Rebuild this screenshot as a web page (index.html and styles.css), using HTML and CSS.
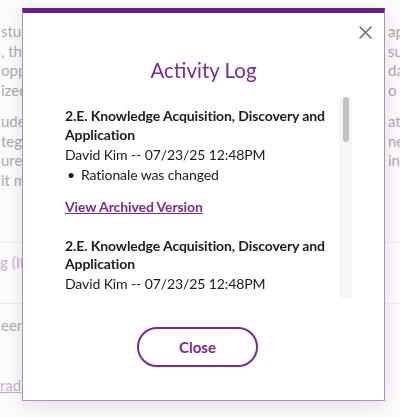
FILE: index.html
```html
<!DOCTYPE html>
<html lang="en">

<head>
    <meta charset="UTF-8">
    <meta name="viewport" content="width=device-width, initial-scale=1.0">
    <title>Activity Log</title>
    <link rel="stylesheet" href="styles.css">
</head>

<body>
    <div class="page">
        <div class="para">
            <div class="line"><span>students will be able to</span><span>apply</span></div>
            <div class="line"><span>, the program will</span><span>sup</span></div>
            <div class="line"><span>opportunities for</span><span>dat</span></div>
            <div class="line"><span>ized assessments</span><span>o ev</span></div>
        </div>
        <div class="para">
            <div class="line"><span>udents in the</span><span>atio</span></div>
            <div class="line"><span>tegrated into</span><span>ne</span></div>
            <div class="line"><span>ure and</span><span>ine</span></div>
            <div class="line"><span>it methods</span><span></span></div>
        </div>
        <div class="section">
            <a class="page-link">g (If applicable)</a>
        </div>
        <div class="section last">
            <div class="line"><span>een completed</span><span></span></div>
            <a class="page-link under">rad (Optional)</a>
        </div>
    </div>

    <div class="backdrop"></div>

    <div class="modal" role="dialog" aria-labelledby="logTitle">
        <button class="close-x" aria-label="Close">
            <svg width="13" height="13" viewBox="0 0 13 13">
                <path d="M1 1 L12 12 M12 1 L1 12" stroke="#6b6b6b" stroke-width="1.5" fill="none" stroke-linecap="round"/>
            </svg>
        </button>

        <h2 id="logTitle">Activity Log</h2>

        <div class="log">
            <div class="log-body">
                <div class="entry">
                    <div class="entry-title">2.E. Knowledge Acquisition, Discovery and Application</div>
                    <div class="meta">David Kim -- 07/23/25 12:48PM</div>
                    <ul><li>Rationale was changed</li></ul>
                    <a class="archived" href="#">View Archived Version</a>
                </div>
                <div class="entry">
                    <div class="entry-title">2.E. Knowledge Acquisition, Discovery and Application</div>
                    <div class="meta">David Kim -- 07/23/25 12:48PM</div>
                    <ul><li>Rationale was changed</li></ul>
                    <a class="archived" href="#">View Archived Version</a>
                </div>
                <div class="entry">
                    <div class="entry-title">2.E. Knowledge Acquisition, Discovery and Application</div>
                    <div class="meta">David Kim -- 07/22/25 03:15PM</div>
                    <ul><li>Description was changed</li></ul>
                    <a class="archived" href="#">View Archived Version</a>
                </div>
                <div class="entry">
                    <div class="entry-title">2.E. Knowledge Acquisition, Discovery and Application</div>
                    <div class="meta">David Kim -- 07/20/25 09:41AM</div>
                    <ul><li>Item was created</li></ul>
                </div>
            </div>
            <!-- scroll track for the log list -->
            <div class="scrollbar"><div class="thumb"></div></div>
        </div>

        <div class="footer">
            <button class="close-btn">Close</button>
        </div>
    </div>
</body>

</html>
```

FILE: styles.css
```css
body {
    margin: 0;
    padding: 0;
    background: #ffffff;
    font-family: 'Lato', 'Noto Sans', sans-serif;
    color: #1a1a1a;
    width: 400px;
    height: 417px;
    overflow: hidden;
}

/* page behind the dialog */
.page {
    padding-top: 22px;
    font-size: 15px;
    line-height: 19.5px;
    color: #222;
}

.para {
    margin-bottom: 12px;
}

.line {
    display: flex;
    white-space: nowrap;
    padding-left: 1px;
}

.line span {
    overflow: hidden;
}

.line span:first-child {
    flex: 1;
}

.line span:last-child {
    flex: 0 0 12px;
}

.section {
    border-top: 1px solid #d6d6d6;
    margin-top: 52px;
    padding: 10px 0 30px;
}

.section.last {
    margin-top: 0;
    padding-top: 12px;
}

.page-link {
    display: block;
    color: #7a2a90;
}

.page-link.under {
    margin-top: 41px;
    text-decoration: underline;
}

.backdrop {
    position: fixed;
    inset: 0;
    background: rgba(250, 250, 251, 0.62);
}

/* dialog */
.modal {
    position: absolute;
    left: 22px;
    top: 8px;
    width: 361px;
    height: 387px;
    background: #ffffff;
    border: 1px solid #b58ac6;
    border-top: 5px solid #6c1f86;
    box-shadow: 0 4px 18px rgba(0, 0, 0, 0.12);
    display: flex;
    flex-direction: column;
}

.close-x {
    position: absolute;
    top: 12px;
    right: 11px;
    width: 15px;
    height: 15px;
    padding: 1px;
    border: none;
    background: none;
    cursor: pointer;
}

h2 {
    margin: 45px 0 0;
    text-align: center;
    font-size: 20.5px;
    font-weight: normal;
    line-height: 24px;
    color: #7a2a90;
}

.log {
    display: flex;
    margin: 15px 32px 0 42px;
    height: 201px;
}

.log-body {
    flex: 1;
    overflow: hidden;
    padding-top: 10px;
    font-size: 14px;
    letter-spacing: -0.1px;
}

.scrollbar {
    flex: 0 0 13px;
    background: #f6f6f6;
}

.thumb {
    width: 6px;
    height: 45px;
    margin: 0 auto;
    background: #c2c2c2;
    border-radius: 3px;
}

.entry {
    margin-bottom: 20px;
}

.entry-title {
    font-weight: bold;
    line-height: 18.5px;
}

.meta {
    line-height: 20px;
    margin-top: 0.5px;
}

ul {
    margin: 0;
    padding-left: 2px;
    list-style: none;
    line-height: 20px;
}

li::before {
    content: "\2022";
    margin-right: 6px;
}

.archived {
    display: inline-block;
    margin-top: 12px;
    color: #7a2a90;
    font-weight: bold;
    line-height: 20px;
}

.footer {
    flex: 1;
    display: flex;
    justify-content: center;
    align-items: flex-start;
    padding-top: 29px;
    padding-right: 12px;
}

.close-btn {
    width: 121px;
    height: 40px;
    border: 2px solid #7a2a90;
    border-radius: 20px;
    background: #ffffff;
    color: #7a2a90;
    font-family: 'Lato', 'Noto Sans', sans-serif;
    font-size: 15px;
    font-weight: bold;
    cursor: pointer;
}
```
